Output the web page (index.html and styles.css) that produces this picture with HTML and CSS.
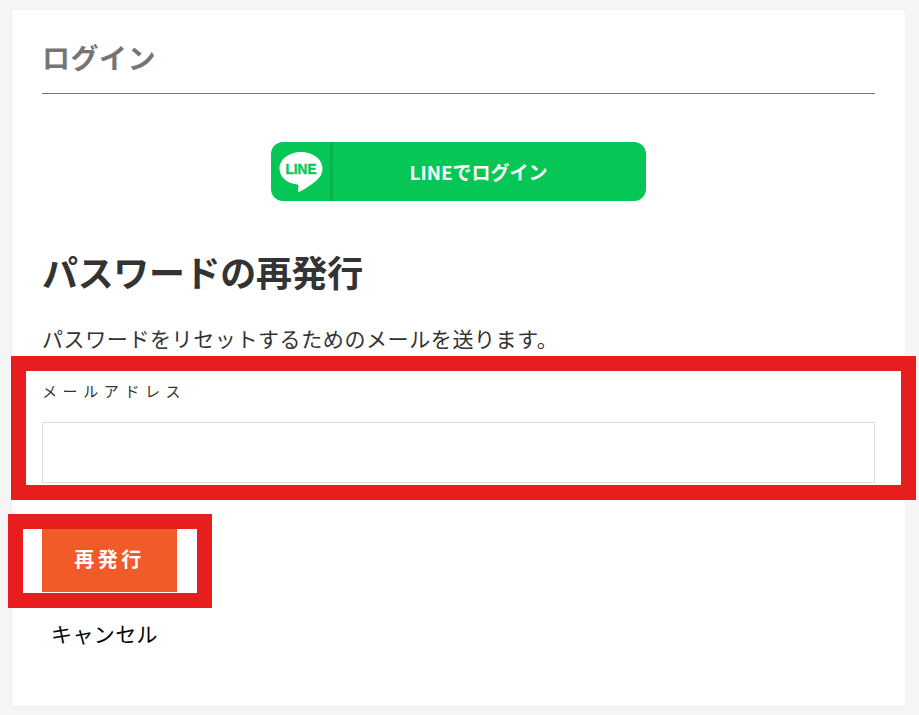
FILE: index.html
```html
<!DOCTYPE html>
<html lang="ja">
<head>
    <meta charset="utf-8">
    <title>パスワードの再発行</title>
    <link rel="stylesheet" href="styles.css">
</head>
<body>
    <div class="card">
        <h3 class="login-title">ログイン</h3>
        <div class="line-wrap">
            <a class="line-btn" href="#">
                <span class="line-icon">
                    <svg width="44" height="50" viewBox="0 0 44 50">
                        <path d="M22 5C10.400 5 .5 12 .5 21.500C.5 30 8 36.500 18 37.500C19.500 37.700 19.600 38.500 19.400 40.500L19 44C19 45 19.600 45.300 20.500 44.800C26 42 33 37.500 37.500 33.500C41.500 30 43.500 26 43.500 21.500C43.500 12 33.600 5 22 5Z" fill="#fff"/>
                        <text x="22" y="26.500" textLength="31" lengthAdjust="spacingAndGlyphs" class="line-logo-text">LINE</text>
                    </svg>
                </span>
                <span class="line-label">LINEでログイン</span>
            </a>
        </div>
        <h2 class="reset-title">パスワードの再発行</h2>
        <p class="reset-text">パスワードをリセットするためのメールを送ります。</p>
        <label class="field-label" for="email">メールアドレス</label>
        <input class="field-input" id="email" type="text">
        <button class="submit-btn" type="button">再発行</button>
        <a class="cancel-link" href="#">キャンセル</a>
        <div class="mark mark-field"></div>
        <div class="mark mark-button"></div>
    </div>
</body>
</html>
```

FILE: styles.css
```css
* {
    box-sizing: border-box;
}

html, body {
    height: 100%;
}

body {
    margin: 0;
    padding: 10px 14px 9px 12px;
    background-color: #f5f5f5;
    font-family: "Noto Sans CJK JP", "Noto Sans", sans-serif;
    color: #333;
    overflow: hidden;
}

.card {
    position: relative;
    height: 696px;
    padding: 0 30px;
    background-color: #fff;
    box-shadow: 0 0 1px rgba(0, 0, 0, 0.15);
}

.login-title {
    height: 84px;
    margin: 0;
    padding-top: 26px;
    border-bottom: 1px solid #777;
    font-size: 28px;
    line-height: 42px;
    font-weight: 700;
    letter-spacing: 0.5px;
    color: #757575;
}

.line-wrap {
    display: flex;
    justify-content: center;
    padding-top: 48px;
}

.line-btn {
    display: flex;
    width: 375px;
    height: 59px;
    border-radius: 12px;
    background-color: #06c755;
    color: #fff;
    text-decoration: none;
}

.line-icon {
    display: flex;
    align-items: center;
    justify-content: center;
    width: 62px;
    border-right: 3px solid #05b54d;
}

.line-logo-text {
    font-family: "Liberation Sans", sans-serif;
    font-size: 14px;
    font-weight: 700;
    fill: #06c755;
    stroke: #06c755;
    stroke-width: 0.4;
    text-anchor: middle;
}

.line-label {
    flex: 1;
    padding-right: 22px;
    text-align: center;
    font-size: 19px;
    font-weight: 700;
    line-height: 59px;
}

.reset-title {
    margin: 43px 0 0;
    font-size: 36px;
    line-height: 54px;
    font-weight: 700;
    letter-spacing: -0.35px;
    color: #333;
}

.reset-text {
    margin: 25px 0 0;
    font-size: 21px;
    line-height: 31px;
    letter-spacing: 0.6px;
}

.field-label {
    display: block;
    margin-top: 26px;
    font-size: 15px;
    line-height: 22px;
    letter-spacing: 5.6px;
}

.field-input {
    display: block;
    width: 100%;
    height: 61px;
    margin-top: 20px;
    border: 1px solid #ddd;
    background-color: #fff;
}

.submit-btn {
    display: block;
    width: 135px;
    height: 65px;
    margin-top: 44px;
    padding: 0 0 2px;
    border: none;
    background-color: #f15a29;
    color: #fff;
    font-family: inherit;
    font-size: 20px;
    font-weight: 700;
    letter-spacing: 3.5px;
}

.cancel-link {
    display: block;
    margin: 25px 0 0 9px;
    font-size: 21px;
    line-height: 32px;
    letter-spacing: 0.4px;
    color: #000;
    text-decoration: none;
}

/* red marks drawn over the form */
.mark {
    position: absolute;
    border: 15px solid #e81e1e;
}

.mark-field {
    left: -1.500px;
    top: 346px;
    width: 905px;
    height: 144px;
}

.mark-button {
    left: -4.500px;
    top: 504px;
    width: 204.500px;
    height: 94px;
}
```
